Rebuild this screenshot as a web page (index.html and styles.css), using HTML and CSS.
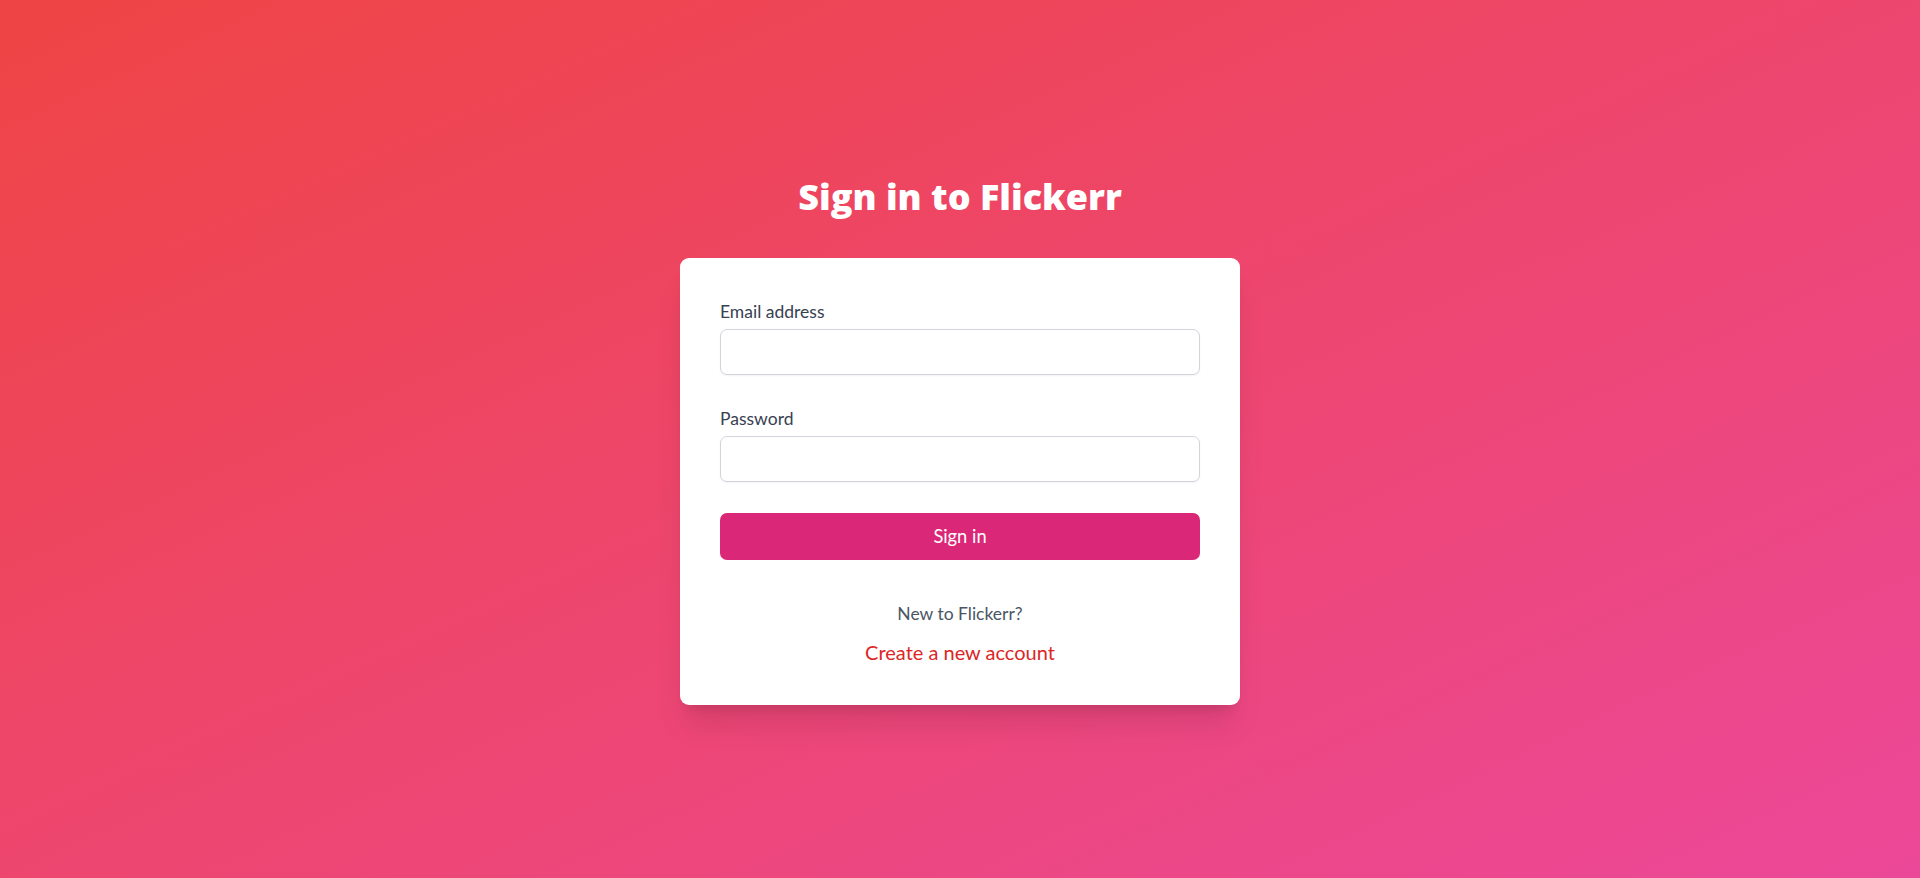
FILE: index.html
```html
<!DOCTYPE html>
<html lang="en">
<head>
<meta charset="utf-8">
<title>Sign in to Flickerr</title>
<link rel="stylesheet" href="styles.css">
</head>
<body>
<main class="page">
  <h1 class="title">Sign in to Flickerr</h1>
  <div class="card">
    <form class="form">
      <div class="field">
        <label class="label" for="email">Email address</label>
        <input class="input" id="email" type="email">
      </div>
      <div class="field">
        <label class="label" for="password">Password</label>
        <input class="input" id="password" type="password">
      </div>
      <button class="button" type="button">Sign in</button>
    </form>
    <div class="footer">
      <p class="footer-text">New to Flickerr?</p>
      <a class="footer-link" href="#">Create a new account</a>
    </div>
  </div>
</main>
</body>
</html>
```

FILE: styles.css
```css
* { box-sizing: border-box; }
html, body { margin: 0; padding: 0; }
body {
  font-family: "Lato", "Noto Sans", sans-serif;
  background: linear-gradient(to bottom right, #ef4444, #ec4899);
  min-height: 100vh;
}
.page {
  min-height: 100vh;
  display: flex;
  flex-direction: column;
  align-items: center;
  justify-content: center;
}
.title {
  margin: 0;
  color: #ffffff;
  font-family: "Open Sans", "Noto Sans", sans-serif;
  font-size: 36px;
  line-height: 45px;
  font-weight: 800;
  text-align: center;
}
.card {
  margin-top: 39px;
  width: 560px;
  background: #ffffff;
  border-radius: 9px;
  padding: 41px 40px 38px;
  box-shadow: 0 25px 31px -6px rgba(0,0,0,0.1), 0 10px 12px -7px rgba(0,0,0,0.1);
}
.form {
  display: flex;
  flex-direction: column;
  gap: 31px;
}
.field {
  display: flex;
  flex-direction: column;
  gap: 5px;
}
.label {
  font-size: 17.5px;
  line-height: 25px;
  color: #374151;
}
.input {
  height: 46px;
  border: 1px solid #d1d5db;
  border-radius: 7px;
  box-shadow: 0 1px 2px rgba(0,0,0,0.05);
  font-size: 17.5px;
  padding: 0 14px;
  font-family: inherit;
  outline: none;
}
.button {
  height: 47px;
  border: none;
  border-radius: 7px;
  background: #db2777;
  color: #ffffff;
  font-family: inherit;
  font-size: 18.3px;
  line-height: 25px;
  cursor: pointer;
}
.footer {
  margin-top: 39px;
  display: flex;
  flex-direction: column;
  align-items: center;
  gap: 8px;
}
.footer-text {
  margin: 0;
  font-size: 17.5px;
  line-height: 30px;
  color: #4b5563;
}
.footer-link {
  font-size: 20px;
  line-height: 30px;
  color: #dc2626;
  text-decoration: none;
}
```
